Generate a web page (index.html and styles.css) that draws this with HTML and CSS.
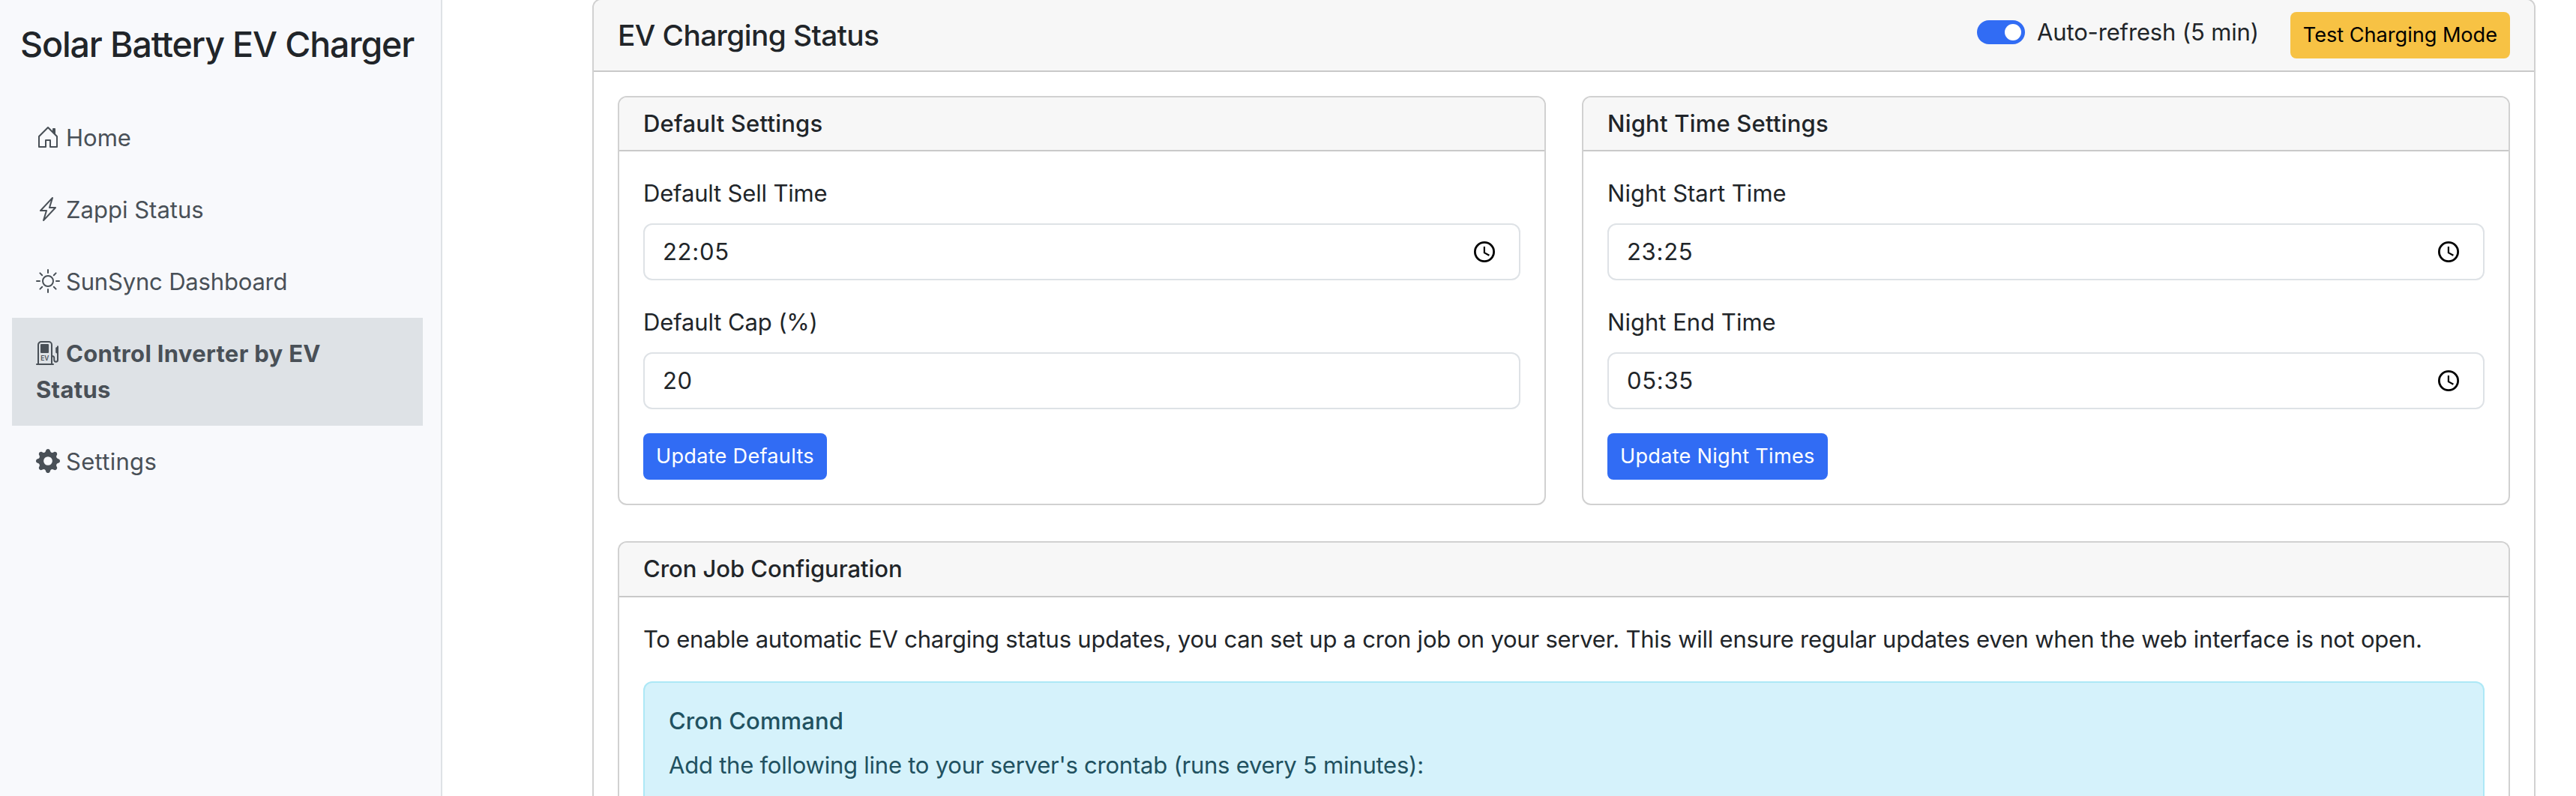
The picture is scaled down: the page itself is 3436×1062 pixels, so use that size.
FILE: index.html
```html
<!DOCTYPE html>
<html lang="en">
<head>
<meta charset="utf-8">
<title>Solar Battery EV Charger</title>
<link rel="stylesheet" href="styles.css">
</head>
<body>
<div class="layout">
  <aside class="sidebar">
    <h4 class="brand">Solar Battery EV Charger</h4>
    <nav class="nav">
      <a class="nav-link"><svg class="icon" viewBox="0 0 16 16"><path d="M8.354 1.146a.5.5 0 0 0-.708 0l-6 6A.5.5 0 0 0 1.5 7.5v7a.5.5 0 0 0 .5.5h4.5a.5.5 0 0 0 .5-.5v-4h2v4a.5.5 0 0 0 .5.5H14a.5.5 0 0 0 .5-.5v-7a.5.5 0 0 0-.146-.354L13 5.793V2.5a.5.5 0 0 0-.5-.5h-1a.5.5 0 0 0-.5.5v1.293zM2.5 14V7.707l5.5-5.5 5.5 5.5V14H10v-4a.5.5 0 0 0-.5-.5h-3a.5.5 0 0 0-.5.5v4z"/></svg>Home</a>
      <a class="nav-link"><svg class="icon" viewBox="0 0 16 16"><path d="M11.251.068a.5.5 0 0 1 .227.58L9.677 6.5H13a.5.5 0 0 1 .364.843l-8 8.5a.5.5 0 0 1-.842-.49L6.323 9.5H3a.5.5 0 0 1-.364-.843l8-8.5a.5.5 0 0 1 .615-.09zM4.157 8.5H7a.5.5 0 0 1 .478.647L6.11 13.59l5.732-6.09H9a.5.5 0 0 1-.478-.647L9.89 2.41z"/></svg>Zappi Status</a>
      <a class="nav-link tight"><svg class="icon" viewBox="0 0 16 16"><path d="M8 11a3 3 0 1 1 0-6 3 3 0 0 1 0 6m0 1a4 4 0 1 0 0-8 4 4 0 0 0 0 8M8 0a.5.5 0 0 1 .5.5v2a.5.5 0 0 1-1 0v-2A.5.5 0 0 1 8 0m0 13a.5.5 0 0 1 .5.5v2a.5.5 0 0 1-1 0v-2A.5.5 0 0 1 8 13m8-5a.5.5 0 0 1-.5.5h-2a.5.5 0 0 1 0-1h2a.5.5 0 0 1 .5.5M3 8a.5.5 0 0 1-.5.5h-2a.5.5 0 0 1 0-1h2A.5.5 0 0 1 3 8m10.657-5.657a.5.5 0 0 1 0 .707l-1.414 1.415a.5.5 0 1 1-.707-.708l1.414-1.414a.5.5 0 0 1 .707 0m-9.193 9.193a.5.5 0 0 1 0 .707L3.05 13.657a.5.5 0 0 1-.707-.707l1.414-1.414a.5.5 0 0 1 .707 0m9.193 2.121a.5.5 0 0 1-.707 0l-1.414-1.414a.5.5 0 0 1 .707-.707l1.414 1.414a.5.5 0 0 1 0 .707M4.464 4.465a.5.5 0 0 1-.707 0L2.343 3.05a.5.5 0 1 1 .707-.707l1.414 1.414a.5.5 0 0 1 0 .708"/></svg>SunSync Dashboard</a>
      <a class="nav-link active"><svg class="icon" viewBox="0 0 16 16"><path fill="none" stroke="currentColor" stroke-linecap="round" d="M1.5 15.5v-13a2 2 0 0 1 2-2h5a2 2 0 0 1 2 2v13M.5 15.5h11M10.5 10h.4a1.2 1.2 0 0 1 1.2 1.2v1.3c0 1.8 2.4 1.8 2.4 0V3.6"/><rect x="3" y="2" width="5.5" height="6" rx=".5"/><rect x="13.1" y="4" width="1.8" height="4.2" rx=".8"/><text class="ev" x="3.1" y="12.9">EV</text></svg>Control Inverter by EV Status</a>
      <a class="nav-link loose"><svg class="icon" viewBox="0 0 16 16"><path d="M9.405 1.05c-.413-1.4-2.397-1.4-2.81 0l-.1.34a1.464 1.464 0 0 1-2.105.872l-.31-.17c-1.283-.698-2.686.705-1.987 1.987l.169.311c.446.82.023 1.841-.872 2.105l-.34.1c-1.4.413-1.4 2.397 0 2.81l.34.1a1.464 1.464 0 0 1 .872 2.105l-.17.31c-.698 1.283.705 2.686 1.987 1.987l.311-.169a1.464 1.464 0 0 1 2.105.872l.1.34c.413 1.4 2.397 1.4 2.81 0l.1-.34a1.464 1.464 0 0 1 2.105-.872l.31.17c1.283.698 2.686-.705 1.987-1.987l-.169-.311a1.464 1.464 0 0 1 .872-2.105l.34-.1c1.4-.413 1.4-2.397 0-2.81l-.34-.1a1.464 1.464 0 0 1-.872-2.105l.17-.31c.698-1.283-.705-2.686-1.987-1.987l-.311.169a1.464 1.464 0 0 1-2.105-.872zM8 10.93a2.929 2.929 0 1 1 0-5.86 2.929 2.929 0 0 1 0 5.858z"/></svg>Settings</a>
    </nav>
  </aside>
  <main class="content">
    <section class="card card-main">
      <header class="card-header main-header">
        <h5 class="page-title">EV Charging Status</h5>
        <div class="actions">
          <label class="switch-row"><span class="switch"><span class="knob"></span></span><span class="switch-label">Auto-refresh (5 min)</span></label>
          <button class="btn btn-warning">Test Charging Mode</button>
        </div>
      </header>
      <div class="main-body">
        <div class="columns">
          <section class="card">
            <header class="card-header"><h6 class="card-title">Default Settings</h6></header>
            <div class="card-body">
              <label class="label sell">Default Sell Time</label>
              <div class="control"><span class="value">22:05</span><svg class="clock" viewBox="0 0 28 28"><circle cx="14" cy="14" r="12.6"/><path d="M13.9 7v8.2l6.5 3.6"/></svg></div>
              <label class="label cap">Default Cap (%)</label>
              <div class="control"><span class="value">20</span></div>
              <button class="btn btn-primary">Update Defaults</button>
            </div>
          </section>
          <section class="card">
            <header class="card-header"><h6 class="card-title">Night Time Settings</h6></header>
            <div class="card-body">
              <label class="label">Night Start Time</label>
              <div class="control"><span class="value">23:25</span><svg class="clock" viewBox="0 0 28 28"><circle cx="14" cy="14" r="12.6"/><path d="M13.9 7v8.2l6.5 3.6"/></svg></div>
              <label class="label">Night End Time</label>
              <div class="control"><span class="value">05:35</span><svg class="clock" viewBox="0 0 28 28"><circle cx="14" cy="14" r="12.6"/><path d="M13.9 7v8.2l6.5 3.6"/></svg></div>
              <button class="btn btn-primary">Update Night Times</button>
            </div>
          </section>
        </div>
        <section class="card cron">
          <header class="card-header"><h6 class="card-title cron-title">Cron Job Configuration</h6></header>
          <div class="card-body cron-body">
            <p class="text">To enable automatic EV charging status updates, you can set up a cron job on your server. This will ensure regular updates even when the web interface is not open.</p>
            <div class="alert">
              <h6 class="alert-title">Cron Command</h6>
              <p class="text">Add the following line to your server's crontab (runs every 5 minutes):</p>
            </div>
          </div>
        </section>
      </div>
    </section>
  </main>
</div>
</body>
</html>
```
FILE: styles.css
```css
* {
  box-sizing: border-box;
}

body {
  margin: 0;
  height: 1062px;
  overflow: hidden;
  background: #fff;
  color: #212529;
  font: 400 31.04px/48px Inter, "Liberation Sans", sans-serif;
}

h4, h5, h6, p {
  margin: 0;
  font-weight: 500;
}

.layout {
  display: flex;
  height: 1062px;
}

/* Sidebar */
.sidebar {
  flex: none;
  width: 590px;
  padding: 30px 24px 0 16px;
  background: #f8f9fc;
  border-right: 2px solid #dee2e6;
}

.brand {
  padding-left: 11px;
  font-size: 46.56px;
  line-height: 58px;
  letter-spacing: -1.13px;
  white-space: nowrap;
}

.nav {
  display: flex;
  flex-direction: column;
  margin-top: 48px;
}

.nav-link {
  display: block;
  padding: 24px 32px;
  color: #495057;
}

.tight {
  letter-spacing: -0.2px;
}

.loose {
  letter-spacing: 0.28px;
}

.active {
  background: #dee2e6;
  font-weight: 700;
  letter-spacing: 0.3px;
}

.icon {
  width: 32px;
  height: 32px;
  margin-right: 8px;
  vertical-align: -4px;
  fill: currentColor;
}

.ev {
  font-size: 4.2px;
  line-height: 1;
  font-weight: 600;
  letter-spacing: 0;
}

/* Cards */
.content {
  flex: 1;
  padding: 0 54px 0 200px;
}

.card {
  overflow: hidden;
  background: #fff;
  border: 2px solid #d1d1d1;
  border-radius: 12px;
}

.card-main {
  height: 1064px;
  margin-top: -2px;
  border-bottom: 0;
  border-radius: 12px 12px 0 0;
}

.card-header {
  padding: 16px 32px;
  background: #f7f7f7;
  border-bottom: 2px solid #c9c9c9;
}

.main-header {
  display: flex;
  justify-content: space-between;
  align-items: center;
  height: 96px;
}

.page-title {
  font-size: 38.8px;
  letter-spacing: -0.58px;
}

.actions {
  display: flex;
}

.switch-row {
  display: flex;
  align-items: flex-start;
  margin: 3px 42px 0 0;
}

.switch {
  display: flex;
  justify-content: flex-end;
  width: 64px;
  height: 32px;
  margin: 8px 16px 0 0;
  padding: 5px;
  background: #316cf4;
  border-radius: 16px;
}

.knob {
  width: 22px;
  height: 22px;
  background: #fff;
  border-radius: 50%;
}

.switch-label {
  letter-spacing: -0.17px;
}

.main-body {
  padding: 32px 32px 0;
}

.columns {
  display: grid;
  grid-template-columns: 1fr 1fr;
  gap: 48px;
}

.card-title {
  font-size: 31.04px;
  line-height: 38.4px;
  letter-spacing: 0.2px;
}

.cron-title {
  letter-spacing: -0.06px;
}

.card-body {
  padding: 32px;
}

/* Form controls */
.label {
  display: block;
  margin-bottom: 16px;
}

.sell {
  letter-spacing: -0.19px;
}

.cap {
  letter-spacing: -0.15px;
}

.control {
  display: flex;
  justify-content: space-between;
  align-items: center;
  height: 76px;
  margin-bottom: 32px;
  padding: 0 32px 0 24px;
  border: 2px solid #dee2e6;
  border-radius: 12px;
}

.value {
  letter-spacing: 0.7px;
}

.clock {
  width: 28px;
  height: 28px;
  fill: none;
  stroke: #000;
  stroke-width: 2.8;
}

.clock path {
  stroke-width: 2.2;
}

.btn {
  display: block;
  height: 62px;
  padding: 0 17px;
  border: 0;
  border-radius: 8px;
  font: 400 27.16px/42px Inter, "Liberation Sans", sans-serif;
}

.btn-primary {
  background: #316cf4;
  color: #fff;
  letter-spacing: 0.25px;
}

.btn-warning {
  background: #f7c244;
  color: #000;
  letter-spacing: -0.04px;
}

/* Cron section */
.cron {
  height: 340px;
  margin-top: 48px;
  border-bottom: 0;
  border-radius: 12px 12px 0 0;
}

.cron-body {
  padding-bottom: 0;
}

.text {
  font-weight: 400;
  letter-spacing: -0.246px;
  white-space: nowrap;
}

.alert {
  height: 153px;
  margin-top: 32px;
  padding: 32px 32px 0;
  background: #d5f2fb;
  border: 2px solid #ade8f6;
  border-bottom: 0;
  border-radius: 12px 12px 0 0;
  color: #215160;
}

.alert-title {
  margin-bottom: 16px;
  font-size: 31.04px;
  line-height: 38.4px;
  letter-spacing: 0.08px;
}
```
